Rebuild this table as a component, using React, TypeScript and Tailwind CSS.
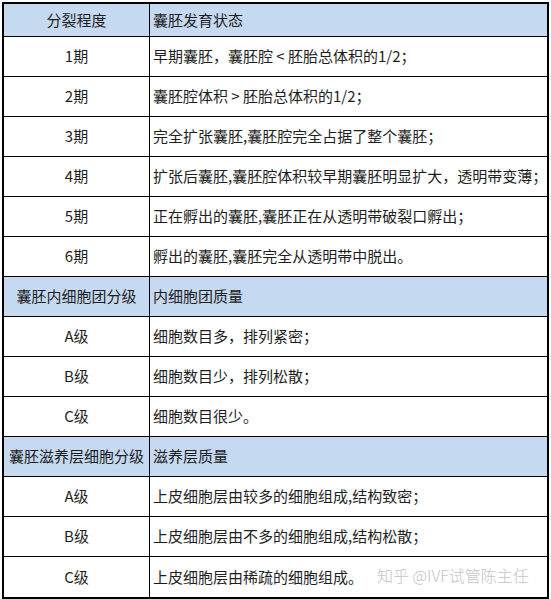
import React from "react"

type Row = { left: string; right: string; head?: boolean }

const rows: Row[] = [
  { left: "分裂程度", right: "囊胚发育状态", head: true },
  { left: "1期", right: "早期囊胚，囊胚腔 < 胚胎总体积的1/2；" },
  { left: "2期", right: "囊胚腔体积 > 胚胎总体积的1/2；" },
  { left: "3期", right: "完全扩张囊胚,囊胚腔完全占据了整个囊胚；" },
  { left: "4期", right: "扩张后囊胚,囊胚腔体积较早期囊胚明显扩大，透明带变薄；" },
  { left: "5期", right: "正在孵出的囊胚,囊胚正在从透明带破裂口孵出；" },
  { left: "6期", right: "孵出的囊胚,囊胚完全从透明带中脱出。" },
  { left: "囊胚内细胞团分级", right: "内细胞团质量", head: true },
  { left: "A级", right: "细胞数目多，排列紧密；" },
  { left: "B级", right: "细胞数目少，排列松散；" },
  { left: "C级", right: "细胞数目很少。" },
  { left: "囊胚滋养层细胞分级", right: "滋养层质量", head: true },
  { left: "A级", right: "上皮细胞层由较多的细胞组成,结构致密；" },
  { left: "B级", right: "上皮细胞层由不多的细胞组成,结构松散；" },
  { left: "C级", right: "上皮细胞层由稀疏的细胞组成。" },
]

export default function App() {
  return (
    <div className="relative w-[551px] h-[599px] bg-white pt-[2px] pl-[2px] font-['Microsoft_YaHei','Noto_Sans_CJK_SC',sans-serif] text-[15px] text-[#1e1e1e]">
      <div className="w-[547px] border-2 border-black">
        {rows.map((r, i) => (
          <div
            key={i}
            className={
              "grid grid-cols-[146px_1fr] " +
              (i === 0 ? "h-[33px] " : "h-[40px] ") +
              (i === rows.length - 1 ? "h-[39px] " : "border-b border-black ") +
              (r.head ? "bg-[#c5d9f1]" : "bg-white")
            }
          >
            <div className="flex items-center justify-center border-r border-black whitespace-nowrap">
              {r.left}
            </div>
            <div className="flex items-center pl-[3px] whitespace-nowrap">{r.right}</div>
          </div>
        ))}
      </div>
      <div className="absolute left-[377px] top-[563px] text-[16px] font-light text-[#c4c4c4] whitespace-nowrap">
        知乎 @IVF试管陈主任
      </div>
    </div>
  )
}
